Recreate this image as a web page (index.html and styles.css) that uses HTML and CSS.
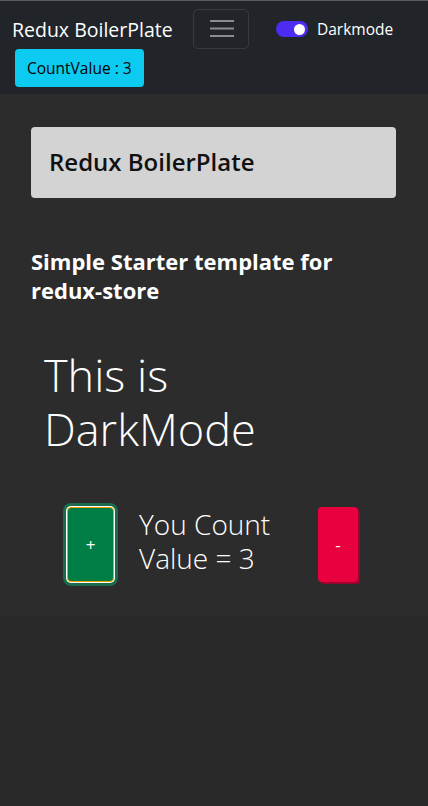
FILE: index.html
```html
<!DOCTYPE html>
<html lang="en">
<head>
<meta charset="utf-8">
<title>Redux BoilerPlate</title>
<link rel="stylesheet" href="styles.css">
</head>
<body>
<header class="navbar">
  <div class="nav-row">
    <span class="brand">Redux BoilerPlate</span>
    <button class="toggler" type="button" aria-label="Toggle navigation">
      <svg width="30" height="30" viewBox="0 0 30 30"><path d="M4 7h24M4 14.5h24M4 22h24" stroke="#8a8c8f" stroke-width="2" stroke-linecap="butt"/></svg>
    </button>
    <label class="switch">
      <span class="track"><span class="knob"></span></span>
      <span class="switch-label">Darkmode</span>
    </label>
  </div>
  <div class="badge">CountValue : 3</div>
</header>
<main class="main">
  <div class="card"><h2 class="card-title">Redux BoilerPlate</h2></div>
  <h3 class="subtitle">Simple Starter template for redux-store</h3>
  <h1 class="display">This is DarkMode</h1>
  <div class="counter">
    <button class="btn btn-plus" type="button">+</button>
    <p class="count-text">You Count Value = 3</p>
    <button class="btn btn-minus" type="button">-</button>
  </div>
</main>
</body>
</html>
```

FILE: styles.css
```css
* { box-sizing: border-box; }
html, body { margin: 0; padding: 0; }
body {
  background: #282828;
  font-family: "Open Sans", "Noto Sans", sans-serif;
  color: #fff;
  border-top: 1px solid #5a5a5a;
}
.navbar {
  background: #212529;
  height: 93px;
  padding: 8px 0 0 12px;
}
.nav-row {
  display: flex;
  align-items: center;
  height: 40px;
}
.brand {
  font-size: 19.5px;
  color: #fff;
  width: 181px;
  white-space: nowrap;
}
.toggler {
  width: 56px;
  height: 40px;
  background: transparent;
  border: 1px solid rgba(255,255,255,0.1);
  border-radius: 5px;
  display: flex;
  align-items: center;
  justify-content: center;
  padding: 0;
}
.switch {
  display: flex;
  align-items: center;
  margin-left: 27px;
}
.track {
  width: 32px;
  height: 16px;
  border-radius: 8px;
  background: #4c2cf2;
  position: relative;
  display: block;
}
.knob {
  position: absolute;
  right: 3px;
  top: 2.5px;
  width: 11px;
  height: 11px;
  border-radius: 50%;
  background: #fff;
}
.switch-label {
  margin-left: 9px;
  font-size: 15.5px;
  color: #fff;
}
.badge {
  display: inline-block;
  margin: 0 0 0 3px;
  background: #0dcaf0;
  color: #000;
  font-size: 15.5px;
  height: 38px;
  line-height: 38px;
  padding: 0 12px;
  border-radius: 4px;
}
.main {
  background: #2c2c2c;
  padding: 33px 32px 34px 31px;
}
.card {
  background: #d3d3d3;
  border-radius: 4px;
  height: 71px;
  padding: 0 18px;
  display: flex;
  align-items: center;
}
.card-title {
  margin: 0;
  font-size: 24px;
  font-weight: 600;
  color: #111;
  line-height: 1.2;
}
.subtitle {
  margin: 49px 0 0;
  font-size: 22px;
  font-weight: 700;
  line-height: 1.3;
  color: #fff;
}
.display {
  margin: 44px 0 0 13px;
  max-width: 300px;
  font-size: 45px;
  font-weight: 300;
  line-height: 1.2;
}
.counter {
  display: flex;
  align-items: center;
  margin: 51px 0 0 36px;
}
.btn {
  border: none;
  color: #fff;
  font-family: inherit;
  font-size: 17px;
  border-radius: 4px;
  padding: 0;
  height: 75px;
}
.btn-plus {
  width: 47px;
  background: #017e45;
  border: 1px solid #f39b00;
  box-shadow: 0 0 0 1px #fff, 0 0 0 4px #1c6b4c;
}
.count-text {
  margin: 0 0 0 25px;
  padding-bottom: 6px;
  width: 179px;
  font-size: 28px;
  font-weight: 300;
  line-height: 1.2;
}
.btn-minus {
  width: 40px;
  background: #e8003f;
  box-shadow: 2px 2px 0 #9e0030;
}
```
